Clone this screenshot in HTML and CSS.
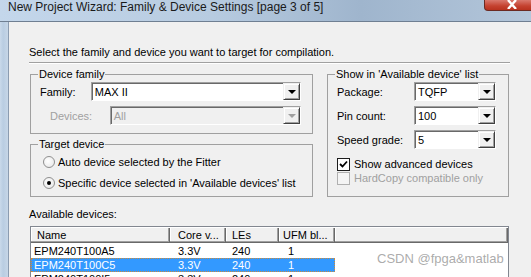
FILE: index.html
```html
<!DOCTYPE html>
<html lang="en">
<head>
  <meta charset="UTF-8">
  <title>New Project Wizard</title>
  <link rel="stylesheet" href="styles.css">
</head>
<body>
  <div class="window">
    <div class="titlebar">
      <span class="title">New Project Wizard: Family &amp; Device Settings [page 3 of 5]</span>
      <span class="close">
        <svg width="14" height="9" viewBox="0 0 14 9"><path d="M3 0 L11 9 M11 0 L3 9" stroke="#fff" stroke-width="2.4"/></svg>
      </span>
    </div>

    <div class="frame">
      <div class="frame-edge"></div>
      <div class="client">
        <p class="intro">Select the family and device you want to target for compilation.</p>
        <div class="rule"></div>

        <div class="groups">
          <fieldset class="group family">
            <legend>Device family</legend>
            <div class="field">
              <label class="lbl-family">Family:</label>
              <div class="combo combo-family"><span class="val">MAX II</span><span class="drop"><i></i></span></div>
            </div>
            <div class="field disabled">
              <label class="lbl-devices">Devices:</label>
              <div class="combo combo-devices"><span class="val">All</span><span class="drop"><i></i></span></div>
            </div>
          </fieldset>

          <fieldset class="group show">
            <legend>Show in 'Available device' list</legend>
            <div class="field">
              <label class="lbl-show">Package:</label>
              <div class="combo combo-small"><span class="val">TQFP</span><span class="drop"><i></i></span></div>
            </div>
            <div class="field">
              <label class="lbl-show">Pin count:</label>
              <div class="combo combo-small"><span class="val">100</span><span class="drop"><i></i></span></div>
            </div>
            <div class="field">
              <label class="lbl-show">Speed grade:</label>
              <div class="combo combo-small"><span class="val">5</span><span class="drop"><i></i></span></div>
            </div>
            <div class="check">
              <span class="box">
                <svg width="9" height="9" viewBox="0 0 9 9"><path d="M1 4 L3.5 6.5 L8 1.5" fill="none" stroke="#000" stroke-width="1.8"/></svg>
              </span>
              <span>Show advanced devices</span>
            </div>
            <div class="check disabled">
              <span class="box"></span>
              <span>HardCopy compatible only</span>
            </div>
          </fieldset>

          <fieldset class="group target">
            <legend>Target device</legend>
            <div class="radio"><span class="dot"></span><span>Auto device selected by the Fitter</span></div>
            <div class="radio"><span class="dot on"></span><span>Specific device selected in 'Available devices' list</span></div>
          </fieldset>
        </div>

        <div class="avail-label">Available devices:</div>
        <div class="listview">
          <div class="lv-head">
            <span class="col c-name">Name</span>
            <span class="col c-core">Core v...</span>
            <span class="col c-les">LEs</span>
            <span class="col c-ufm">UFM bl...</span>
            <span class="col c-rest"></span>
          </div>
          <div class="lv-row">
            <span class="col c-name">EPM240T100A5</span>
            <span class="col c-core">3.3V</span>
            <span class="col c-les">240</span>
            <span class="col c-ufm">1</span>
          </div>
          <div class="lv-row selected">
            <span class="col c-name">EPM240T100C5</span>
            <span class="col c-core">3.3V</span>
            <span class="col c-les">240</span>
            <span class="col c-ufm">1</span>
          </div>
          <div class="lv-row">
            <span class="col c-name">EPM240T100I5</span>
            <span class="col c-core">3.3V</span>
            <span class="col c-les">240</span>
            <span class="col c-ufm">1</span>
          </div>
        </div>
      </div>
    </div>

    <div class="watermark">CSDN @fpga&amp;matlab</div>
  </div>
</body>
</html>
```

FILE: styles.css
```css
body {
  margin: 0;
  background: #f0f0f0;
  font-family: "Liberation Sans", Arial, sans-serif;
  font-size: 11px;
  color: #000;
}

.window {
  position: relative;
  width: 531px;
  height: 277px;
  overflow: hidden;
  display: flex;
  flex-direction: column;
}

.titlebar {
  height: 21px;
  flex: none;
  display: flex;
  align-items: flex-start;
  background: linear-gradient(90deg, #c4d7eb 0%, #b7cbe0 40%, #9fb5cd 68%, #b3c6da 100%);
  border-bottom: 1px solid #6f7f92;
}

.title {
  padding: 0 0 0 8px;
  font-size: 12px;
  line-height: 15px;
  color: #1a1a1a;
  white-space: nowrap;
}

.close {
  margin-left: auto;
  width: 56px;
  height: 11px;
  margin-right: -9px;
  display: flex;
  align-items: flex-start;
  justify-content: center;
  background: linear-gradient(#d9786d, #c4412f 60%, #b8321f);
  border: 1px solid #6b2a22;
  border-top: none;
  border-radius: 0 0 4px 4px;
  box-sizing: border-box;
}

.frame {
  flex: 1;
  display: flex;
}

.frame-edge {
  width: 8px;
  flex: none;
  background: linear-gradient(90deg, #c9d9ea, #b9cde2 40%, #c6d6e7);
  border-right: 1px solid #8b9cb1;
}

.client {
  flex: 1;
  padding: 22px 0 0 20px;
  background: #f0f0f0;
}

.intro {
  margin: 0;
  line-height: 16px;
  white-space: nowrap;
}

.rule {
  width: 481px;
  margin-top: 2px;
  border-top: 1px solid #a0a0a0;
  border-bottom: 1px solid #fff;
}

.groups {
  display: grid;
  grid-template-columns: 283px 182px;
  column-gap: 14px;
  row-gap: 3px;
  margin: 3px 0 0 1px;
  white-space: nowrap;
}

.group {
  margin: 0;
  border: 1px solid #a0a0a0;
  padding: 1px 11px 8px 9px;
  min-width: 0;
}

.group legend {
  padding: 0 1px;
  margin-left: -2px;
  line-height: 14px;
}

.show {
  grid-column: 2;
  grid-row: 1 / span 2;
  padding-bottom: 0;
}

.family {
  grid-column: 1;
  grid-row: 1;
}

.target {
  grid-column: 1;
  grid-row: 2;
  padding-top: 0;
  padding-bottom: 3px;
}

.field {
  display: flex;
  align-items: center;
  margin-bottom: 5px;
}

.family .field:last-child {
  margin-bottom: 0;
}

.lbl-family {
  width: 51px;
}

.lbl-devices {
  width: 60px;
  padding-left: 10px;
}

.lbl-show {
  width: 77px;
}

.disabled {
  color: #a0a0a0;
}

.combo {
  display: flex;
  align-items: center;
  background: #fff;
  border-style: solid;
  border-width: 1px;
  border-color: #a0a0a0 #fff #fff #a0a0a0;
  box-shadow: inset 1px 1px 0 #696969;
  box-sizing: border-box;
  height: 19px;
}

.combo-family {
  width: 211px;
}

.combo-devices {
  width: 192px;
}

.combo-small {
  width: 82px;
}

.disabled .combo {
  background: #f0f0f0;
}

.val {
  flex: 1;
  padding-left: 3px;
  padding-top: 1px;
}

.drop {
  width: 17px;
  height: 17px;
  flex: none;
  display: flex;
  align-items: center;
  justify-content: center;
  background: #f0f0f0;
  border-style: solid;
  border-width: 1px;
  border-color: #f0f0f0 #404040 #404040 #f0f0f0;
  box-shadow: inset 1px 1px 0 #fff, inset -1px -1px 0 #a0a0a0;
  box-sizing: border-box;
}

.drop i {
  width: 0;
  height: 0;
  border-left: 4px solid transparent;
  border-right: 4px solid transparent;
  border-top: 4px solid #000;
}

.disabled .drop i {
  border-top-color: #a0a0a0;
}

.check {
  display: flex;
  align-items: center;
  gap: 4px;
  height: 14px;
  margin-top: 8px;
}

.check + .check {
  margin-top: 0;
}

.box {
  width: 13px;
  height: 13px;
  flex: none;
  box-sizing: border-box;
  border: 1px solid #1c1c1c;
  background: #fff;
  display: flex;
  align-items: center;
  justify-content: center;
}

.check.disabled .box {
  border-color: #b0b0b0;
  background: #f4f4f4;
}

.radio {
  display: flex;
  align-items: center;
  gap: 3px;
  height: 21px;
  padding-left: 3px;
}

.dot {
  width: 12px;
  height: 12px;
  flex: none;
  box-sizing: border-box;
  border-radius: 50%;
  border: 1px solid #8f8f8f;
  background: radial-gradient(circle at 40% 40%, #fff, #e4e4e4);
  display: flex;
  align-items: center;
  justify-content: center;
}

.dot.on::after {
  content: "";
  width: 4px;
  height: 4px;
  border-radius: 50%;
  background: #000;
}

.avail-label {
  margin-top: 10px;
  line-height: 14px;
}

.listview {
  margin: 5px 0 0 1px;
  width: 479px;
  height: 60px;
  background: #fff;
  border-style: solid;
  border-width: 1px 1px 0 1px;
  border-color: #828790;
  box-sizing: border-box;
  overflow: hidden;
}

.lv-head {
  display: flex;
  height: 16px;
  background: #f0f0f0;
  border-top: 1px solid #fff;
  box-sizing: border-box;
}

.lv-head .col {
  height: 15px;
  line-height: 14px;
  border-right: 1px solid #696969;
  border-bottom: 1px solid #696969;
  box-shadow: inset -1px -1px 0 #a0a0a0, inset 1px 0 0 #fff;
}

.col {
  flex: none;
  box-sizing: border-box;
  white-space: nowrap;
  overflow: hidden;
}

.c-name {
  width: 139px;
  padding-left: 3px;
}

.lv-head .c-name {
  padding-left: 6px;
}

.c-core {
  width: 56px;
  padding-left: 8px;
}

.c-les {
  width: 53px;
  padding-left: 6px;
}

.c-ufm {
  width: 56px;
  padding-left: 9px;
}

.lv-head .c-ufm {
  padding-left: 4px;
}

.c-rest {
  flex: 1;
}

.lv-row {
  display: flex;
  width: 304px;
  height: 14px;
  line-height: 14px;
  margin-top: 1px;
  box-sizing: border-box;
}

.lv-row + .lv-row {
  margin-top: 0;
}

.lv-row.selected {
  background: #3399ff;
  color: #fff;
  outline: 1px dotted #c98a3c;
  outline-offset: -1px;
}

.watermark {
  position: absolute;
  left: 377px;
  top: 251px;
  font-size: 13px;
  line-height: 16px;
  color: rgba(150, 150, 150, 0.8);
  white-space: nowrap;
}
```
